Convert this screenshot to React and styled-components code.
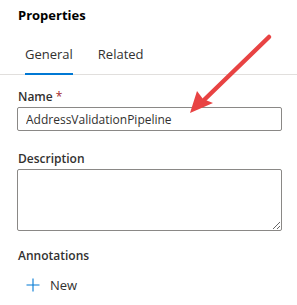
import React from "react";
import styled, { createGlobalStyle } from "styled-components";

const Global = createGlobalStyle`
  html, body { margin: 0; padding: 0; background: #fff; }
  body { font-family: "Open Sans", "Noto Sans", sans-serif; color: #323130; }
  * { box-sizing: border-box; }
`;

const Panel = styled.div`
  position: relative;
  width: 297px;
  height: 305px;
  background: #fff;
  overflow: hidden;
`;

const Title = styled.h2`
  margin: 0;
  padding: 5px 0 0 18px;
  font-size: 13px;
  line-height: 20px;
  font-weight: 700;
  color: #000;
`;

const TabList = styled.div`
  display: flex;
  gap: 11px;
  margin-top: 19px;
  padding-left: 18px;
  border-bottom: 1px solid #e1dfdd;
`;

const Tab = styled.div`
  padding: 0 7px;
  font-size: 13px;
  line-height: 20px;
  color: #323130;
`;

const TabLabel = styled.span`
  display: block;
  padding-bottom: 9px;
  margin-bottom: -1px;
  border-bottom: 2px solid ${(p) => (p.$active ? "#0078d4" : "transparent")};
`;

const Form = styled.div`
  display: flex;
  flex-direction: column;
  padding: 11px 15px 0 17px;
`;

const Field = styled.div`
  display: flex;
  flex-direction: column;
  margin-bottom: ${(p) => p.$mb || 0}px;
`;

const Label = styled.label`
  padding-left: 1px;
  font-size: 12px;
  line-height: 21px;
  font-weight: 600;
  color: #323130;
`;

const Required = styled.span`
  color: #a4262c;
  font-weight: 400;
  margin-left: 3px;
`;

const Input = styled.input`
  width: 265px;
  height: 24px;
  border: 1px solid #8a8886;
  border-radius: 2px;
  padding: 0 8px;
  font-family: inherit;
  font-size: 12px;
  color: #323130;
  outline: none;
`;

const TextArea = styled.textarea`
  width: 265px;
  height: 62px;
  border: 1px solid #8a8886;
  border-radius: 2px;
  font-family: inherit;
  font-size: 12px;
  outline: none;
  resize: both;
`;

const AddButton = styled.button`
  display: flex;
  align-items: center;
  gap: 9px;
  height: 32px;
  margin-top: 3px;
  padding: 0 0 0 8px;
  background: none;
  border: none;
  font-family: inherit;
  font-size: 13px;
  color: #323130;
  align-self: flex-start;
`;

const ArrowLayer = styled.svg`
  position: absolute;
  left: 0;
  top: 0;
  pointer-events: none;
`;

export default function App() {
  return (
    <>
      <Global />
      <Panel>
        <Title>Properties</Title>
        <TabList>
          <Tab>
            <TabLabel $active>General</TabLabel>
          </Tab>
          <Tab>
            <TabLabel>Related</TabLabel>
          </Tab>
        </TabList>
        <Form>
          <Field $mb={17}>
            <Label>
              Name<Required>*</Required>
            </Label>
            <Input defaultValue="AddressValidationPipeline" />
          </Field>
          <Field $mb={14}>
            <Label>Description</Label>
            <TextArea />
          </Field>
          <Field>
            <Label>Annotations</Label>
            <AddButton>
              <svg width="16" height="16" viewBox="0 0 16 16">
                <path d="M8 1.5v13M1.5 8h13" stroke="#0078d4" strokeWidth="1.1" fill="none" />
              </svg>
              New
            </AddButton>
          </Field>
        </Form>
        <ArrowLayer width="297" height="305" viewBox="0 0 297 305">
          <line x1="269" y1="37" x2="204" y2="100" stroke="#e84343" strokeWidth="4.5" strokeLinecap="round" />
          <polygon points="190,113 197,91 203,99 213,103" fill="#e84343" />
        </ArrowLayer>
      </Panel>
    </>
  );
}
